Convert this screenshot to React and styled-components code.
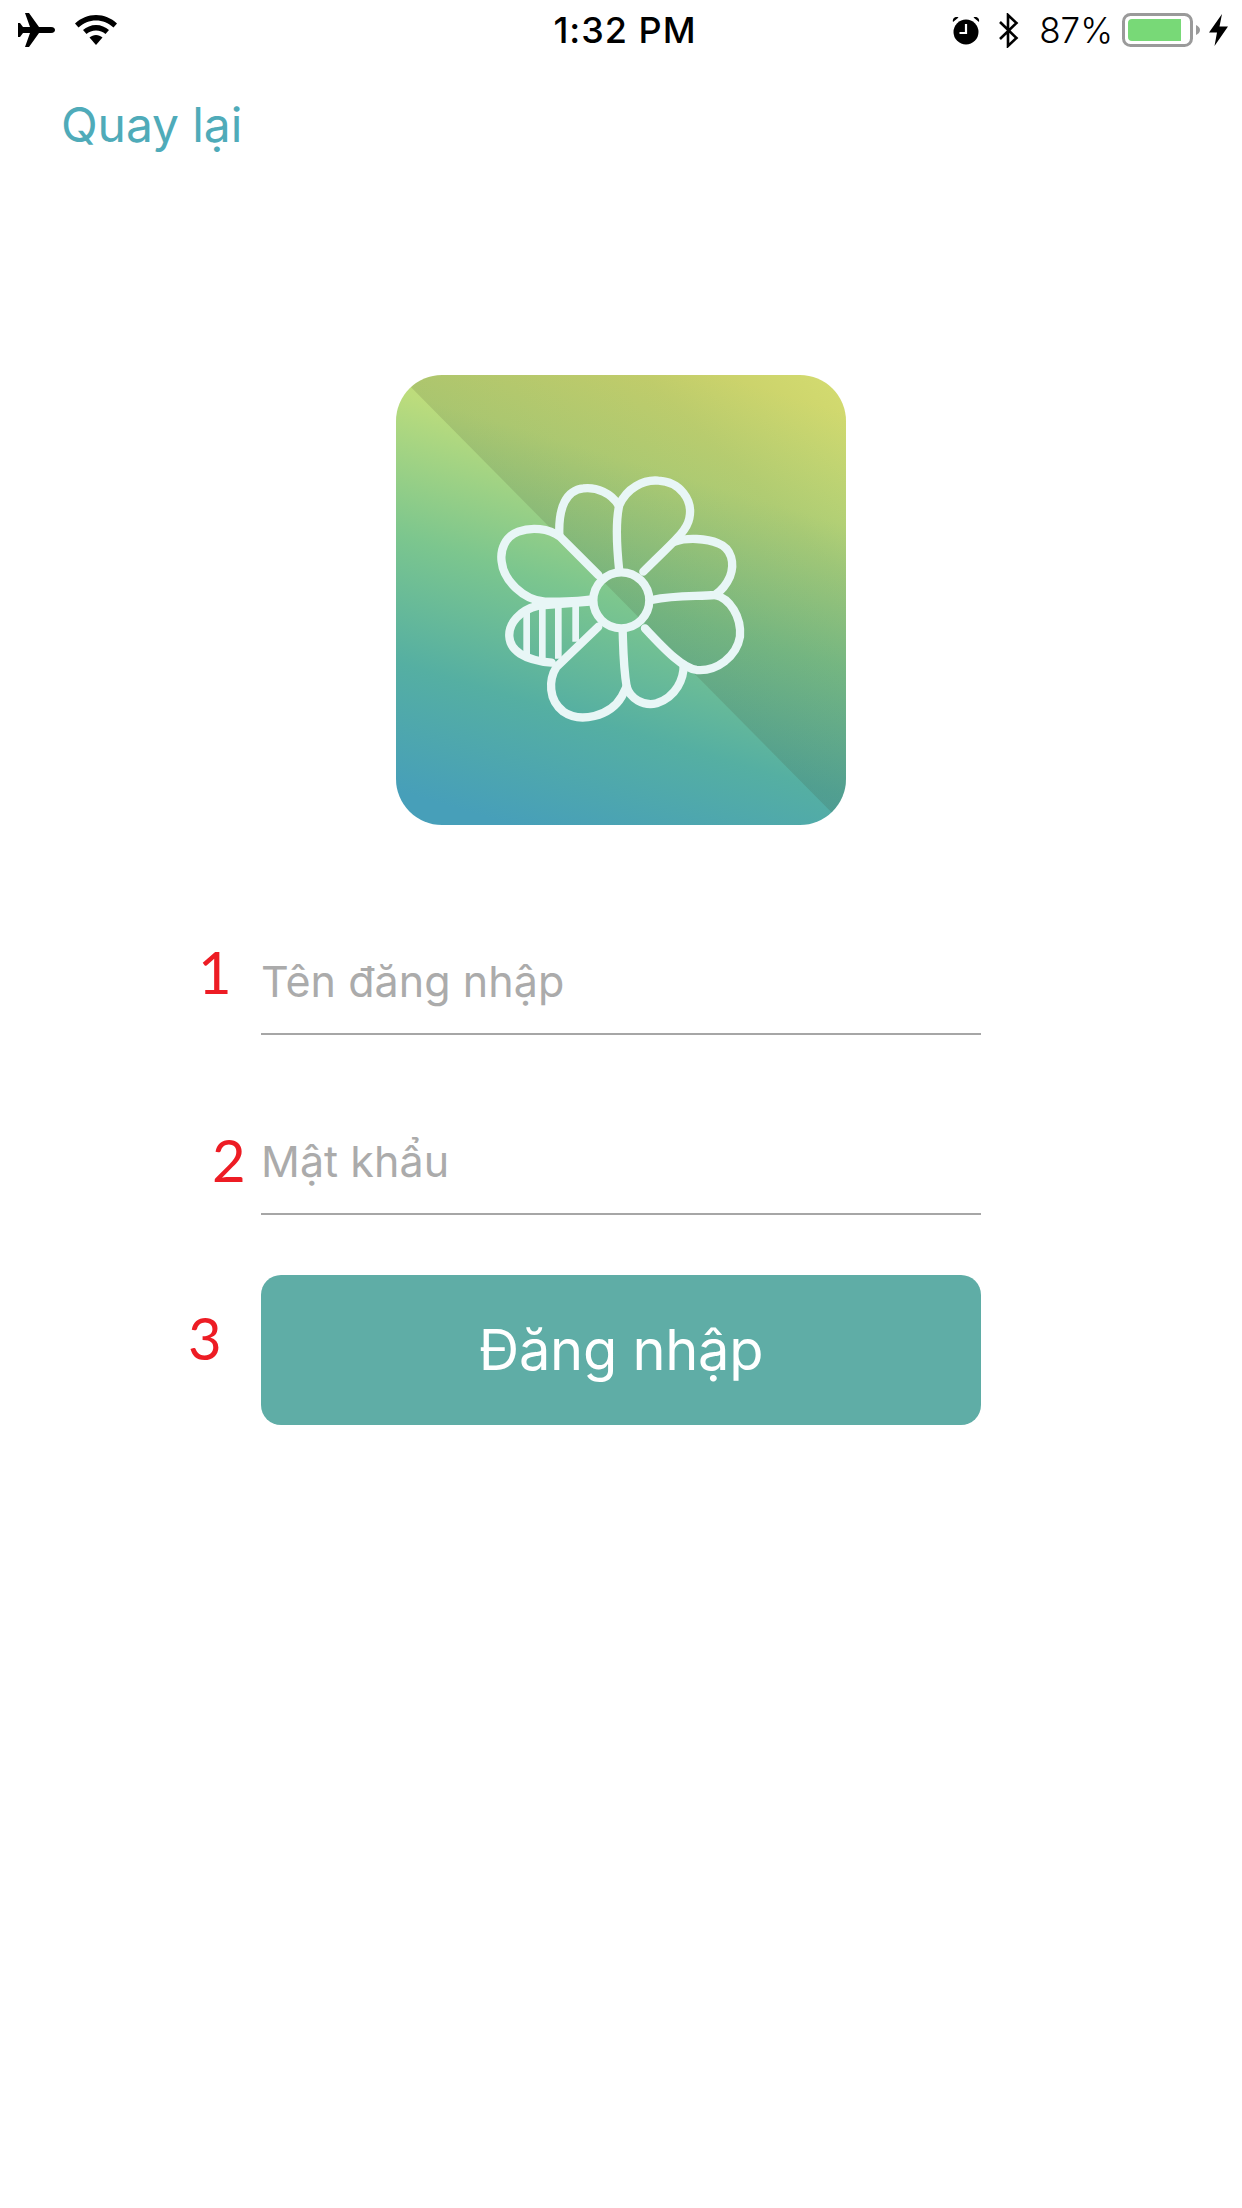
import React from "react";
import styled, { createGlobalStyle } from "styled-components";

const Global = createGlobalStyle`
  html, body { margin: 0; padding: 0; background: #fff; }
  body { font-family: Inter, "Liberation Sans", sans-serif; }
`;

const Page = styled.div`
  width: 1242px;
  height: 2208px;
  background: #fff;
  overflow: hidden;
  display: flex;
  flex-direction: column;
`;

const StatusBar = styled.div`
  height: 60px;
  display: grid;
  grid-template-columns: 1fr auto 1fr;
  align-items: center;
  color: #000;
`;

const StatusLeft = styled.div`
  display: flex;
  align-items: center;
  gap: 20px;
  padding-left: 18px;
`;

const StatusRight = styled.div`
  display: flex;
  align-items: center;
  justify-content: flex-end;
  padding-right: 14px;
`;

const Clock = styled.span`
  font-size: 36px;
  font-weight: 500;
  letter-spacing: 1px;
  position: relative;
  left: 4px;
`;

const Percent = styled.span`
  font-size: 35px;
  font-weight: 300;
  margin: 0 9px 0 20px;
`;

const Icon = styled.svg`
  display: block;
  flex: none;
  margin-left: ${(p) => p.$ml || 0}px;
`;

const NavBar = styled.div`
  height: 134px;
  padding: 36px 0 0 61px;
  box-sizing: border-box;
`;

const BackLink = styled.a`
  font-size: 48px;
  line-height: 58px;
  color: #4fabb9;
  letter-spacing: -0.1px;
`;

const Content = styled.main`
  display: flex;
  flex-direction: column;
  align-items: center;
  padding-top: 181px;
`;

const LogoTile = styled.div`
  width: 450px;
  height: 450px;
  border-radius: 46px;
  overflow: hidden;
`;

const LogoArt = styled.svg`
  display: block;
`;

const Form = styled.form`
  width: 720px;
  margin-top: 90px;
  display: flex;
  flex-direction: column;
`;

const Field = styled.div`
  position: relative;
  height: 120px;
  margin-bottom: 60px;
  box-sizing: border-box;
  border-bottom: 2px solid #a6a6a6;
  display: flex;
  align-items: flex-end;
  padding-bottom: 22px;
`;

const Placeholder = styled.span`
  font-size: 43px;
  line-height: 60px;
  color: #ababab;
  letter-spacing: 0.05px;
`;

const Marker = styled.span`
  position: absolute;
  left: ${(p) => p.$left}px;
  top: ${(p) => p.$top}px;
  font-family: Lato, "Open Sans", sans-serif;
  font-size: 58px;
  line-height: 58px;
  color: #ed1c24;
`;

const SubmitRow = styled.div`
  position: relative;
`;

const SubmitButton = styled.button`
  width: 720px;
  height: 150px;
  border: 0;
  border-radius: 20px;
  background: #5fada6;
  color: #fff;
  font-family: Inter, "Liberation Sans", sans-serif;
  font-size: 56px;
  font-weight: 400;
  letter-spacing: -0.3px;
  padding: 0;
`;

function Flower() {
  return (
    <LogoArt width="450" height="450" viewBox="0 0 450 450">
      <defs>
        <linearGradient id="base" gradientUnits="userSpaceOnUse" x1="290" y1="-10" x2="150" y2="460">
          <stop offset="0" stopColor="#d4dc70" />
          <stop offset="0.22" stopColor="#bcdc7c" />
          <stop offset="0.5" stopColor="#7cc68e" />
          <stop offset="0.75" stopColor="#55afa2" />
          <stop offset="1" stopColor="#479fb9" />
        </linearGradient>
        <linearGradient id="shade" gradientUnits="userSpaceOnUse" x1="450" y1="0" x2="225" y2="225">
          <stop offset="0" stopColor="#3a3a20" stopOpacity="0" />
          <stop offset="0.45" stopColor="#3a3a20" stopOpacity="0.1" />
          <stop offset="1" stopColor="#3a3a20" stopOpacity="0.14" />
        </linearGradient>
      </defs>
      <rect width="450" height="450" fill="url(#base)" />
      <polygon points="0,-3 450,-3 450,452" fill="url(#shade)" />
      <g
        transform="translate(84 85) scale(0.3333)"
        fill="none"
        stroke="#e8f6f6"
        strokeWidth="25"
        strokeLinecap="round"
        strokeLinejoin="round"
      >
        <circle cx="424" cy="421" r="84" />
        <path d="M418 335 C410 260 405 190 418 135 C440 85 490 58 535 62 C600 65 640 120 628 175 C620 215 580 245 490 335" />
        <path d="M415 135 C395 100 350 80 310 85 C260 90 235 140 238 225" />
        <path d="M355 345 L240 230 C205 205 155 200 115 215 C75 230 60 270 65 305 C70 360 130 420 195 425 C250 425 290 425 335 418" />
        <path d="M585 245 C620 232 680 235 715 250 C755 265 765 310 750 350 C738 378 720 395 705 405 C650 410 590 405 515 420" />
        <path d="M705 405 C750 415 785 470 780 530 C770 590 710 635 650 630 C610 625 560 575 495 505" />
        <path d="M611 614 C612 655 590 710 530 730 C490 740 450 715 440 680 C430 620 430 570 428 510" />
        <path d="M355 500 L230 620 C205 660 205 720 250 755 C300 790 390 770 425 710 L440 680" />
        <path d="M330 425 L175 437 C120 450 85 490 88 530 C90 570 130 600 215 608" />
        <path
          strokeWidth="20"
          strokeLinecap="butt"
          d="M140 450 V590 M187 437 V602 M235 432 V596 M287 428 V545"
        />
      </g>
    </LogoArt>
  );
}

export default function App() {
  return (
    <Page>
      <Global />
      <StatusBar>
        <StatusLeft>
          <Icon width="37" height="34" viewBox="0 0 37 34">
            <path d="M7 0 L11 0 L21 14 L33 14 C36 14 37 15.5 37 17 C37 18.5 36 20 33 20 L21 20 L11 34 L7 34 L12 20 L5 20 L2 24 L0 24 L0 10 L2 10 L5 14 L12 14 Z" fill="#000" />
          </Icon>
          <Icon width="42" height="30" viewBox="0 0 42 30">
            <path d="M21 0 C29 0 36 3 42 8.5 L38.5 12.5 C33.5 8 27.5 5.5 21 5.5 C14.5 5.5 8.5 8 3.5 12.5 L0 8.5 C6 3 13 0 21 0 Z" fill="#000" />
            <path d="M21 10 C26 10 30.5 12 34 15 L30.5 19 C28 16.8 24.7 15.5 21 15.5 C17.3 15.5 14 16.8 11.5 19 L8 15 C11.5 12 16 10 21 10 Z" fill="#000" />
            <path d="M21 20 C23.5 20 25.5 21 27.5 22.5 L21 30 L14.5 22.5 C16.5 21 18.5 20 21 20 Z" fill="#000" />
          </Icon>
        </StatusLeft>
        <Clock>1:32 PM</Clock>
        <StatusRight>
          <Icon width="28" height="29" viewBox="0 0 28 29">
            <circle cx="14" cy="16" r="12.5" fill="#000" />
            <path d="M14 8 V17 H7.5" fill="none" stroke="#fff" strokeWidth="2.2" />
            <path d="M1 6 L6.5 1.5 C4 0 0 2 1 6 Z M27 6 L21.5 1.5 C24 0 28 2 27 6 Z" fill="#000" />
          </Icon>
          <Icon $ml={18} width="21" height="35" viewBox="0 0 21 35">
            <path d="M2 9 L18.5 25 L10 33 V2 L18.5 10 L2 26" fill="none" stroke="#000" strokeWidth="2.6" />
          </Icon>
          <Percent>87%</Percent>
          <Icon width="78" height="34" viewBox="0 0 78 34">
            <rect x="1.5" y="1.5" width="68" height="31" rx="7" fill="none" stroke="#9a9a9a" strokeWidth="3" />
            <path d="M10 6 H59 V28 H10 C7.5 28 6 26.5 6 24 V10 C6 7.5 7.5 6 10 6 Z" fill="#78d977" />
            <path d="M74 12 C76.5 13 78 15 78 17 C78 19 76.5 21 74 22 Z" fill="#9a9a9a" />
          </Icon>
          <Icon $ml={9} width="19" height="32" viewBox="0 0 19 32">
            <path d="M13 0 L0 18.5 H8 L5.5 32 L19 12.5 H10.5 Z" fill="#000" />
          </Icon>
        </StatusRight>
      </StatusBar>
      <NavBar>
        <BackLink>Quay lại</BackLink>
      </NavBar>
      <Content>
        <LogoTile>
          <Flower />
        </LogoTile>
        <Form>
          <Field>
            <Marker $left={-63} $top={28}>1</Marker>
            <Placeholder>Tên đăng nhập</Placeholder>
          </Field>
          <Field>
            <Marker $left={-49} $top={36}>2</Marker>
            <Placeholder>Mật khẩu</Placeholder>
          </Field>
          <SubmitRow>
            <Marker $left={-73} $top={34}>3</Marker>
            <SubmitButton type="button">Đăng nhập</SubmitButton>
          </SubmitRow>
        </Form>
      </Content>
    </Page>
  );
}
